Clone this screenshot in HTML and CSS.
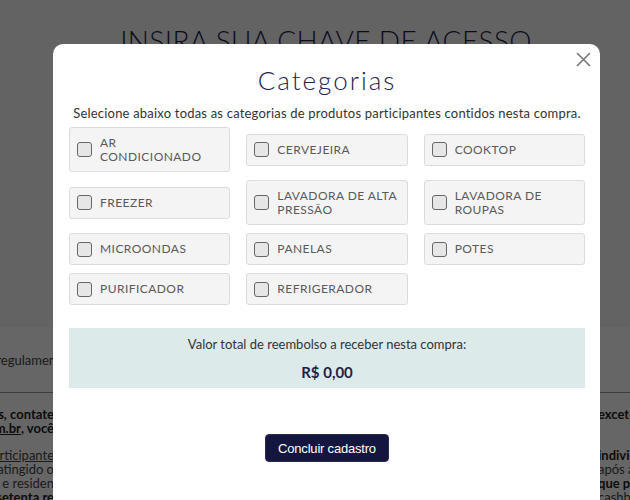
FILE: index.html
```html
<!DOCTYPE html>
<html lang="pt-BR">
<head>
    <meta charset="UTF-8">
    <meta name="viewport" content="width=device-width, initial-scale=1.0">
    <title>Categorias</title>
    <link rel="stylesheet" href="styles.css">
</head>
<body>
    <div class="page">
        <header class="page-top">
            <h1>INSIRA SUA CHAVE DE ACESSO</h1>
        </header>
        <section class="page-rules">
            <div class="rules-link">
                <span class="bg-left wide">Leia o regulamento</span>
            </div>
            <div class="bg-line strong">
                <span class="bg-left">Em caso de dúvidas, contate</span>
                <span class="bg-right">exceto feriados</span>
            </div>
            <div class="bg-line strong">
                <span class="bg-left"><u>contato@promo.com.br</u>, você</span>
                <span class="bg-right"></span>
            </div>
            <div class="bg-line spaced">
                <span class="bg-left"><u>participante</u></span>
                <span class="bg-right strong">individual</span>
            </div>
            <div class="bg-line">
                <span class="bg-left">atingido o</span>
                <span class="bg-right">após a compra</span>
            </div>
            <div class="bg-line">
                <span class="bg-left">do e residen</span>
                <span class="bg-right strong">que possua</span>
            </div>
            <div class="bg-line">
                <span class="bg-left strong">e setenta re</span>
                <span class="bg-right">cashback, o</span>
            </div>
        </section>
    </div>

    <div class="overlay">
        <div class="modal">
            <button class="close" type="button" aria-label="Fechar">
                <svg width="15" height="15" viewBox="0 0 15 15">
                    <path d="M1 1 L14 14 M14 1 L1 14" stroke="#777" stroke-width="1.6" fill="none"/>
                </svg>
            </button>
            <h2 class="modal-title">Categorias</h2>
            <p class="modal-sub">Selecione abaixo todas as categorias de produtos participantes contidos nesta compra.</p>

            <div class="cats">
                <label class="cat"><input type="checkbox"><span>AR CONDICIONADO</span></label>
                <label class="cat"><input type="checkbox"><span>CERVEJEIRA</span></label>
                <label class="cat"><input type="checkbox"><span>COOKTOP</span></label>
                <label class="cat"><input type="checkbox"><span>FREEZER</span></label>
                <label class="cat"><input type="checkbox"><span>LAVADORA DE ALTA PRESSÃO</span></label>
                <label class="cat"><input type="checkbox"><span>LAVADORA DE ROUPAS</span></label>
                <label class="cat"><input type="checkbox"><span>MICROONDAS</span></label>
                <label class="cat"><input type="checkbox"><span>PANELAS</span></label>
                <label class="cat"><input type="checkbox"><span>POTES</span></label>
                <label class="cat"><input type="checkbox"><span>PURIFICADOR</span></label>
                <label class="cat"><input type="checkbox"><span>REFRIGERADOR</span></label>
            </div>

            <div class="total">
                <p>Valor total de reembolso a receber nesta compra:</p>
                <strong>R$ 0,00</strong>
            </div>

            <div class="actions">
                <button class="submit" type="button">Concluir cadastro</button>
            </div>
        </div>
    </div>
</body>
</html>
```

FILE: styles.css
```css
html, body {
    margin: 0;
    height: 100%;
    overflow: hidden;
}
body {
    font-family: Lato, "Open Sans", sans-serif;
    color: #333;
    background: #fff;
}

/* page behind the modal */
.page-top {
    height: 327px;
    background: #f8f8f8;
    padding-top: 23px;
    box-sizing: border-box;
}
.page-top h1 {
    margin: 0;
    padding-left: 22px;
    text-align: center;
    font-size: 28px;
    font-weight: 300;
    letter-spacing: 0.4px;
    color: #1c1f4a;
}
.page-rules {
    font-size: 13px;
    color: #444;
}
.rules-link {
    height: 65px;
    border-bottom: 1px solid #999;
    display: flex;
    align-items: center;
}
.bg-line {
    display: flex;
    justify-content: space-between;
    line-height: 14px;
}
.rules-link + .bg-line {
    margin-top: 14px;
}
.bg-line.spaced {
    margin-top: 13px;
}
.bg-left {
    width: 54px;
    overflow: hidden;
    white-space: nowrap;
    display: flex;
    justify-content: flex-end;
}
.bg-left.wide {
    width: 68px;
}
.bg-right {
    width: 32px;
    overflow: hidden;
    white-space: nowrap;
}
.strong {
    font-weight: 700;
    color: #222;
}

/* modal */
.overlay {
    position: fixed;
    inset: 0;
    background: rgba(0, 0, 0, 0.6);
}
.modal {
    position: relative;
    margin: 44px 30px 0 53px;
    min-height: 480px;
    background: #fff;
    border-radius: 10px;
    padding: 21px 15px 0 16px;
    box-sizing: border-box;
}
.close {
    position: absolute;
    top: 8px;
    right: 9px;
    padding: 0;
    border: none;
    background: none;
    cursor: pointer;
    line-height: 0;
}
.modal-title {
    margin: 0;
    text-align: center;
    font-size: 26px;
    line-height: 30px;
    font-weight: 300;
    letter-spacing: 2px;
    color: #1f2150;
}
.modal-sub {
    margin: 9px 0 5px;
    text-align: center;
    font-size: 13px;
    line-height: 18px;
    letter-spacing: 0.2px;
    color: #333;
}
.cats {
    display: grid;
    grid-template-columns: repeat(3, 1fr);
    column-gap: 16px;
    row-gap: 8px;
    align-items: center;
}
.cat {
    display: flex;
    align-items: center;
    gap: 8px;
    padding: 7.5px 8.5px 7.5px 7px;
    background: #f4f4f4;
    border: 1px solid #dcdcdc;
    border-radius: 3px;
    font-size: 12px;
    line-height: 14px;
    letter-spacing: 0.45px;
    color: #5a5a5a;
    cursor: pointer;
}
.cat input {
    appearance: none;
    flex: none;
    width: 15px;
    height: 15px;
    margin: 0;
    border: 1.5px solid #666;
    border-radius: 3px;
    background: #e6e6e6;
    box-sizing: border-box;
}
.total {
    margin-top: 23px;
    background: #ddeaea;
    padding: 7px 0 6px;
    text-align: center;
}
.total p {
    margin: 0;
    font-size: 13px;
    line-height: 18px;
    color: #333;
}
.total strong {
    display: block;
    margin-top: 9px;
    font-size: 15px;
    line-height: 20px;
    color: #1c1f4a;
}
.actions {
    margin-top: 46px;
    text-align: center;
}
.submit {
    height: 28px;
    padding: 0 12px;
    background: #15163f;
    color: #fff;
    border: 1px solid #2a2b55;
    border-radius: 4px;
    font-family: "Liberation Sans", Arial, sans-serif;
    font-size: 13px;
    letter-spacing: -0.2px;
    cursor: pointer;
}
```
